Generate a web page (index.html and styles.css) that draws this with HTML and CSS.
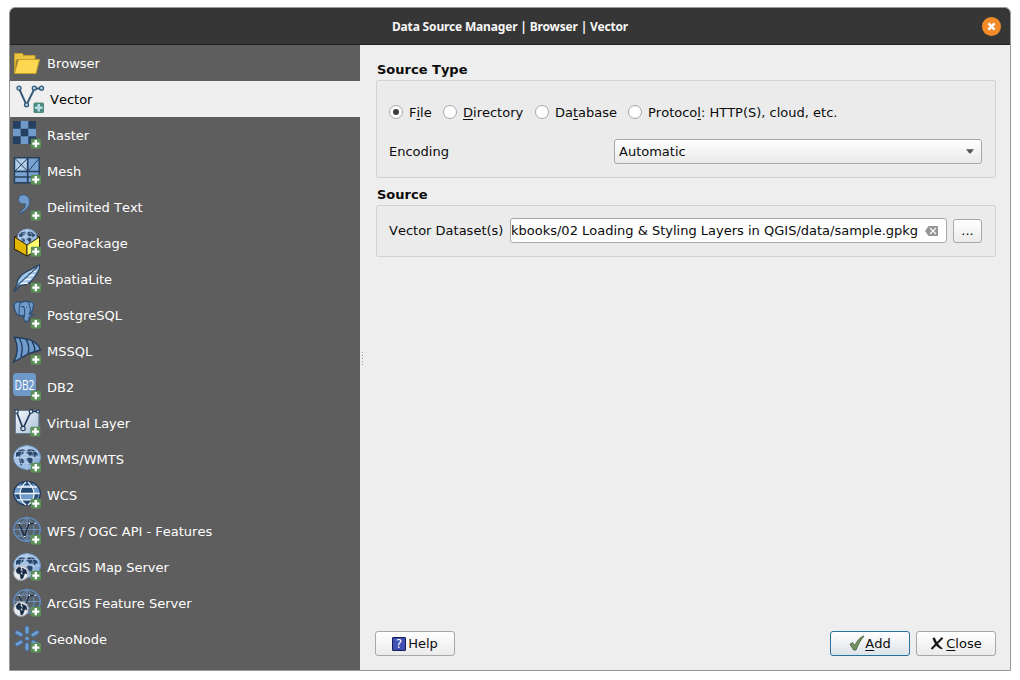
FILE: index.html
```html
<!DOCTYPE html>
<html lang="en">
<head>
<meta charset="utf-8">
<title>Data Source Manager | Browser | Vector</title>
<link rel="stylesheet" href="styles.css">
</head>
<body>
<svg class="defs" aria-hidden="true">
  <defs>
    <linearGradient id="sky" x1="0" y1="0" x2="1" y2="1"><stop offset="0" stop-color="#c3d7ee"/><stop offset="1" stop-color="#7fa8d8"/></linearGradient>
    <linearGradient id="paper" x1="0" y1="0" x2="1" y2="1"><stop offset="0" stop-color="#f4f7fa"/><stop offset="1" stop-color="#a9bfd9"/></linearGradient>
    <symbol id="plus" viewBox="0 0 10 10"><rect width="10" height="10" rx="1.500" fill="#5b9158"/><path d="M5 1.600v6.800M1.600 5h6.800" stroke="#fff" stroke-width="2.300"/></symbol>
    <symbol id="earth" viewBox="0 0 28 28">
      <ellipse cx="14" cy="12.500" rx="13.500" ry="12" fill="url(#sky)" stroke="#6a94c4"/>
      <path d="M3 8l3-3 5-1 1 2-2 1 1 1-3 2-1 2-2-1-2 1zM6 13l4 1 1 3-3 4-1-3zM14 5l3-1 4 1 3 3 1 3-2-1-1 3-3-3-2 1-2-2-2-1zM15 12l4 1 1 3-3 4-2-4-2-1z" fill="#29486c"/>
      <path d="M1 12.500h26M3 6.500h22M3 18.500h22M14 .5v24M14 .5q-14 12 0 24M14 .5q14 12 0 24" fill="none" stroke="#c5d9ee" stroke-width=".5"/>
    </symbol>
    <symbol id="wire" viewBox="0 0 28 28">
      <ellipse cx="14" cy="12.500" rx="13.300" ry="11.800" fill="#59616b" stroke="#5d8fcb" stroke-width="1.300"/>
      <path d="M1 12.500h26M3.500 6h21M3.500 19h21M14 .5v24M14 .5q-15 12 0 24M14 .5q15 12 0 24" fill="none" stroke="#6f9acb" stroke-width=".9"/>
      <path d="M6 6.500l5.500 13L16 6.500h6" fill="none" stroke="#1b2a3e" stroke-width="1.300"/>
      <path d="M5.500 6.300h1.300M15.700 6.300H17M21.300 6.300h1.300M10.900 19.500h1.300" stroke="#fff" stroke-width="1.200"/>
    </symbol>
    <symbol id="mini" viewBox="0 0 16 16"><circle cx="8" cy="8" r="7.200" fill="#e7edf3" stroke="#b9bdc2" stroke-width="1.200"/><path d="M3 5l3-3 2 1-1 2 2 1-2 3-3-1zM9 3l4 2 1 4-2-1-1 2-2-2 1-2zM7 9l4 1-1 3-2 1z" fill="#172b43" stroke="#172b43" stroke-width=".6"/></symbol>
  </defs>
</svg>
<main class="window">
  <header class="titlebar">
    <h1 class="title">Data Source Manager | Browser | Vector</h1>
    <button class="window-close" aria-label="Close window"><svg viewBox="0 0 20 20"><path d="M6.800 6.800l6.400 6.400M13.200 6.800l-6.400 6.400" stroke="#fff" stroke-width="2.600"/></svg></button>
  </header>
  <div class="body">
    <nav class="sidebar">
      <a class="item"><svg class="icon" viewBox="0 0 28 28"><path d="M1.500 23V4.500h8l1 2H22v4H3.500z" fill="#e9c440" stroke="#c2a02b"/><path d="M1.500 24.500L5.500 10.500h21L23 24.500z" fill="#fcd74f" stroke="#c2a02b"/></svg><span>Browser</span></a>
      <a class="item selected"><svg class="icon" viewBox="0 0 28 28"><path d="M3 3.500l7.500 16.500L18.500 3.500h7" fill="none" stroke="#325877" stroke-width="1.900"/><g fill="#b5d3e5" stroke="#325877" stroke-width="1.300"><circle cx="3" cy="3.200" r="2"/><circle cx="10.500" cy="19.800" r="2"/><circle cx="18.300" cy="3.200" r="2"/><circle cx="25.500" cy="3.200" r="2"/></g><rect x="17.500" y="17.500" width="10.500" height="10.500" rx="1.500" fill="#4b8a7c"/><path d="M22.750 19v7.500M19 22.750h7.500" stroke="#b9dce9" stroke-width="2.500"/></svg><span>Vector</span></a>
      <a class="item"><svg class="icon" viewBox="0 0 28 28"><path d="M0 0h23v23H0z" fill="#6e99c9"/><path d="M0 0h7.700v7.700H0zM15.300 0H23v7.700h-7.700zM7.700 7.700h7.600v7.600H7.700zM0 15.300h7.700V23H0zM15.300 15.300H23V23h-7.700z" fill="#243f60"/><use href="#plus" x="17.600" y="17.400" width="10.400" height="10.400"/></svg><span>Raster</span></a>
      <a class="item"><svg class="icon" viewBox="0 0 28 28"><path d="M1.500.700h24.700v25H1.500z" fill="#79a3d2" stroke="#263f5d" stroke-width="1.400"/><path d="M2.500 1.700h11.500v11.500H2.500z" fill="#b3cce8"/><path d="M1.500 14.500h25M14.700.700v25M1.500 20h25" stroke="#263f5d" stroke-width="1.700"/><path d="M2 1.500l12.500 12.500M14.500 1.500L2 14M26 1.500L15.500 14" stroke="#263f5d" stroke-width="1"/><use href="#plus" x="17.600" y="17.400" width="10.400" height="10.400"/></svg><span>Mesh</span></a>
      <a class="item"><svg class="icon" viewBox="0 0 28 28"><path d="M5.500 6.500C5.500 1.500 11 .8 14 3c5 3.800 3.500 13.500-7.500 17.500l-.5-1c5-3 7-6 6-9-3.500 1.500-6.500-1-6.500-4z" fill="#719bcd" stroke="#35587f" stroke-width="1"/><use href="#plus" x="17.600" y="17.400" width="10.400" height="10.400"/></svg><span>Delimited Text</span></a>
      <a class="item"><svg class="icon" viewBox="0 0 28 28"><path d="M1.500 8L14 3l12.500 5v11.500L14 27 1.500 20z" fill="#8b6c17" stroke="#2d2714"/><use href="#earth" x="4" y="-.5" width="20.500" height="20.500"/><path d="M1.500 8L14 16V27L1.500 20z" fill="#e3b600" stroke="#2d2714"/><path d="M14 16l12.500-8v11.500L14 27z" fill="#ffff70" stroke="#2d2714"/><use href="#plus" x="17.600" y="17.400" width="10.400" height="10.400"/></svg><span>GeoPackage</span></a>
      <a class="item"><svg class="icon" viewBox="0 0 28 28"><path d="M.8 27L4 19c-.8-4 5-10 9-12L26.500 0c1 4-2 7-3.500 10-4 6-7 10-16 10.500z" fill="#9fc5e8" stroke="#263f5d" stroke-width="1.200"/><path d="M7 18.500l8-.5M10 15l8-1M14 11l7-1M17 7l6-1" fill="none" stroke="#eef6fd" stroke-width="1.500"/><path d="M.8 27L6 18.800 24.500 2" fill="none" stroke="#34516f" stroke-width="1.200"/><use href="#plus" x="17.600" y="17.400" width="10.400" height="10.400"/></svg><span>SpatiaLite</span></a>
      <a class="item"><svg class="icon" viewBox="0 0 28 28"><path d="M1 4C1 .8 5 .5 8 1.500 11-.2 14 .2 16 1c5-1 5 2 4.200 5-.2 4-2.200 6-3 7l3 .6-3 1.900-1 .5c0 4.500-1 4.500-3 4.500-2.500 0-2.500-2-2.500-6l-3 .5C3 15 1 8 1 4z" fill="#719bcd" stroke="#2e5074" stroke-width="1.300"/><path d="M8 1.500C5 5 6.500 10 6 13l2 2.500M16 1c-1 3 2 5 1.500 8L16 14M8 6c3-2 4 1 3.500 7v3M13 6.500h1" fill="none" stroke="#2e5074" stroke-width="1.100"/><use href="#plus" x="17.600" y="17.400" width="10.400" height="10.400"/></svg><span>PostgreSQL</span></a>
      <a class="item"><svg class="icon" viewBox="0 0 28 28"><path d="M1.500.5C13 1 24 3 27.500 13L16 16.500.8 25C5 17 5 8 1.500.5z" fill="#719bcd" stroke="#203d5d" stroke-width="1.400"/><path d="M6.500 1.500c4 7 3 13 1.500 18.500M13 2.500c4 6 3 11 2 14.500M19 5c3 4 3 7 2.500 10" fill="none" stroke="#203d5d" stroke-width="1.400"/><use href="#plus" x="17.600" y="17.400" width="10.400" height="10.400"/></svg><span>MSSQL</span></a>
      <a class="item"><svg class="icon" viewBox="0 0 28 28"><rect width="23" height="23" rx="4" fill="#6e99c9"/><text x="1.500" y="16.800" textLength="20" lengthAdjust="spacingAndGlyphs" class="db-text">DB2</text><use href="#plus" x="17.600" y="17.400" width="10.400" height="10.400"/></svg><span>DB2</span></a>
      <a class="item"><svg class="icon" viewBox="0 0 28 28"><path d="M2.500 1.500h23.300v23H2.500z" fill="url(#paper)" stroke="#687f9a"/><path d="M3.500 2.500l6.500 17L18 2.500h7" fill="none" stroke="#233d5c" stroke-width="1.700"/><g fill="#dce7f2" stroke="#233d5c" stroke-width="1.200"><circle cx="3.500" cy="2.500" r="1.800"/><circle cx="10" cy="19.500" r="2.200"/><circle cx="18" cy="2.500" r="1.800"/><circle cx="25" cy="2.500" r="1.500"/></g><use href="#plus" x="17.200" y="17.400" width="10.400" height="10.400"/></svg><span>Virtual Layer</span></a>
      <a class="item"><svg class="icon" viewBox="0 0 28 28"><use href="#earth" width="28" height="28"/><use href="#plus" x="17.600" y="17.400" width="10.400" height="10.400"/></svg><span>WMS/WMTS</span></a>
      <a class="item"><svg class="icon" viewBox="0 0 28 28"><ellipse cx="14" cy="12.300" rx="13.300" ry="11.800" fill="#6e99c9" stroke="#203a59" stroke-width="1.300"/><path d="M8 4h12l-2-3h-8zM7 6.500h14v6H7zM2 13h5.500l1 5.500h-4zM20.500 13H26l-2.500 5.500h-4z" fill="#274a73"/><path d="M9 19h10l-3 5h-4z" fill="#274a73"/><path d="M1.500 12.500h25M4 6h20M4 18.800h20M13 1c-8 7-8 17 0 23M15 1c8 7 8 17 0 23" fill="none" stroke="#eef5fb" stroke-width="1.300"/><use href="#plus" x="17.600" y="17.400" width="10.400" height="10.400"/></svg><span>WCS</span></a>
      <a class="item"><svg class="icon" viewBox="0 0 28 28"><use href="#wire" width="28" height="28"/><use href="#plus" x="17.600" y="17.400" width="10.400" height="10.400"/></svg><span>WFS / OGC API - Features</span></a>
      <a class="item"><svg class="icon" viewBox="0 0 28 28"><use href="#earth" width="28" height="28"/><use href="#mini" y="12" width="16" height="16"/><use href="#plus" x="17.600" y="17.400" width="10.400" height="10.400"/></svg><span>ArcGIS Map Server</span></a>
      <a class="item"><svg class="icon" viewBox="0 0 28 28"><use href="#wire" width="28" height="28"/><use href="#mini" y="12" width="16" height="16"/><use href="#plus" x="17.600" y="17.400" width="10.400" height="10.400"/></svg><span>ArcGIS Feature Server</span></a>
      <a class="item"><svg class="icon" viewBox="0 0 28 28"><path d="M14 2.800v4.500M14 19.500V24M4 7.500l4 2.300M20 9.800l4-2.300M4 19.300l4-2.300M20 17l4 2.300" stroke="#426d9f" stroke-width="4.600" stroke-linecap="round"/><path d="M14 2.800v4.500M14 19.500V24M4 7.500l4 2.300M20 9.800l4-2.300M4 19.300l4-2.300M20 17l4 2.300" stroke="#6d9dd3" stroke-width="3" stroke-linecap="round"/><circle cx="14" cy="13.500" r="2" fill="#6d9dd3" stroke="#426d9f" stroke-width=".8"/><use href="#plus" x="17.600" y="17.400" width="10.400" height="10.400"/></svg><span>GeoNode</span></a>
    </nav>
    <div class="splitter"><i></i></div>
    <section class="content">
      <h2 class="heading">Source Type</h2>
      <div class="group type-group">
        <div class="radios">
          <label class="radio file"><i class="dot checked"></i><span>F<u>i</u>le</span></label>
          <label class="radio directory"><i class="dot"></i><span><u>D</u>irectory</span></label>
          <label class="radio database"><i class="dot"></i><span>Da<u>t</u>abase</span></label>
          <label class="radio"><i class="dot"></i><span>Protoco<u>l</u>: HTTP(S), cloud, etc.</span></label>
        </div>
        <div class="encoding"><span>Encoding</span><div class="combo"><span>Automatic</span><svg class="arrow" viewBox="0 0 8 5"><path d="M0 .3h8L4.500 4.500h-1z" fill="#555"/></svg></div></div>
      </div>
      <h2 class="heading second">Source</h2>
      <div class="group source-group">
        <span class="dataset-label">Vector Dataset(s)</span>
        <div class="path-field"><span>kbooks/02 Loading &amp; Styling Layers in QGIS/data/sample.gpkg</span><svg class="clear" viewBox="0 0 13 10"><path d="M0 5l3.500-5H13v10H3.500z" fill="#969696"/><path d="M5 2l6 6M11 2L5 8" stroke="#fff" stroke-width="1.100"/></svg></div>
        <button class="button browse">...</button>
      </div>
      <footer class="actions">
        <button class="button help"><svg class="help-icon" viewBox="0 0 14 14"><rect x=".5" y=".5" width="13" height="13" rx=".5" fill="#4250b4" stroke="#151c55"/><text x="7" y="11" text-anchor="middle" class="question">?</text></svg><span>Help</span></button>
        <button class="button add"><svg class="add-icon" viewBox="0 0 16 16"><path d="M1 8.300L3.500 6.500l2.200 3.300C8 5 11 1 15 0 11.500 4.500 9 8.500 7 14H4.500z" fill="#759360" stroke="#49643c" stroke-width=".9"/></svg><span><u>A</u>dd</span></button>
        <button class="button close"><svg class="close-icon" viewBox="0 0 14 14"><path d="M2.500 1l2.300-.5C6.500 5 9 9 12.800 11.500l-1.300.8C7 10.500 4 6.500 2.500 1z" fill="#181818"/><path d="M12.500.8L1.500 12" stroke="#181818" stroke-width="2"/></svg><span><u>C</u>lose</span></button>
      </footer>
    </section>
  </div>
</main>
</body>
</html>
```
FILE: styles.css
```css
* { box-sizing: border-box; }
body { margin: 0; padding: 7px 9px 9px; background: #fff; font: 13px/16px "DejaVu Sans", sans-serif; font-kerning: none; color: #0b0b0b; }
button { font: inherit; font-kerning: none; color: inherit; }
svg { display: block; flex: none; overflow: visible; }
.defs { position: absolute; width: 0; height: 0; }
.window { width: 1002px; height: 664px; border: 1px solid #989898; border-radius: 6px 6px 0 0; overflow: hidden; display: flex; flex-direction: column; background: #eee; }
.titlebar { height: 37px; flex: none; background: #363636; border-bottom: 1px solid #222; display: grid; grid-template-columns: 37px 1fr 37px; align-items: center; }
.title { grid-column: 2; margin: 0; padding-top: 1px; text-align: center; color: #f7f7f7; font: 700 12px/18px "Noto Sans", sans-serif; letter-spacing: -.17px; }
.window-close { width: 19px; height: 19px; padding: 0; border: 0; border-radius: 50%; background: #f48b29; justify-self: center; }
.window-close svg { width: 19px; height: 19px; }
.body { flex: 1; display: flex; min-height: 0; }
.sidebar { width: 350px; background: #5e5e5e; flex: none; }
.item { height: 36px; display: flex; align-items: center; gap: 6px; padding-left: 3px; color: #fff; }
.item span { padding-top: 2px; }
.selected { background: #efefef; color: #000; padding-left: 6px; }
.icon { width: 28px; height: 28px; }
.db-text { font: 14px "Open Sans", sans-serif; fill: #fff; }
.splitter { width: 5px; display: flex; align-items: center; padding: 4px 0 0 2px; }
.splitter i { width: 1px; height: 15px; background: repeating-linear-gradient(#999 0 1px, #eee 1px 3px); }
.content { flex: 1; display: flex; flex-direction: column; padding: 17px 14px 13px 11px; }
.heading { margin: 0 0 2px 1px; font-size: 13px; line-height: 16px; font-weight: 700; }
.second { margin-top: 9px; }
.group { background: #ebebeb; border: 1px solid #d3d3d3; border-radius: 2px; }
.type-group { height: 98px; padding: 21px 13px 13px 12px; display: flex; flex-direction: column; justify-content: space-between; }
.radios { display: flex; height: 20px; align-items: center; }
.radio { display: flex; align-items: center; gap: 6px; }
.radio span { padding-top: 1px; }
.file { width: 54px; }
.directory { width: 92px; }
.database { width: 93px; }
.dot { width: 14px; height: 14px; border: 1px solid #a5a5a5; border-radius: 50%; background: #fff; display: grid; place-items: center; }
.checked::after { content: ""; width: 6px; height: 6px; border-radius: 50%; background: #3e3e3e; }
u { text-decoration-thickness: 1px; text-underline-offset: 2px; text-decoration-skip-ink: none; }
.encoding { height: 25px; display: flex; justify-content: space-between; align-items: center; }
.combo { width: 368px; height: 25px; border: 1px solid #a8a8a8; border-radius: 3px; background: linear-gradient(#fff, #e9e9e9); display: flex; align-items: center; justify-content: space-between; padding: 0 7px 0 4px; }
.arrow { width: 8px; height: 5px; }
.source-group { height: 52px; padding: 0 13px 1px 12px; display: flex; align-items: center; }
.dataset-label { width: 121px; }
.path-field { width: 437px; height: 25px; border: 1px solid #a8a8a8; border-radius: 3px; background: #fff; display: flex; align-items: center; white-space: nowrap; justify-content: space-between; padding-right: 8px; }
.clear { width: 13px; height: 10px; }
.button { height: 25px; padding: 0; border: 1px solid #a8a8a8; border-radius: 3px; background: linear-gradient(#fff, #ebebeb); display: flex; align-items: center; justify-content: center; }
.browse { width: 29px; height: 24px; margin-left: auto; }
.actions { margin: auto 0 1px -1px; display: flex; align-items: center; gap: 6px; }
.help { width: 80px; margin-right: auto; gap: 2px; }
.help-icon { width: 14px; height: 14px; }
.question { font: 12px "DejaVu Sans", sans-serif; fill: #fff; }
.add { width: 80px; border-color: #26719f; background: linear-gradient(#fff, #dce3e9); }
.add-icon { width: 16px; height: 16px; }
.close { width: 80px; gap: 2px; }
.close-icon { width: 14px; height: 14px; }
```
